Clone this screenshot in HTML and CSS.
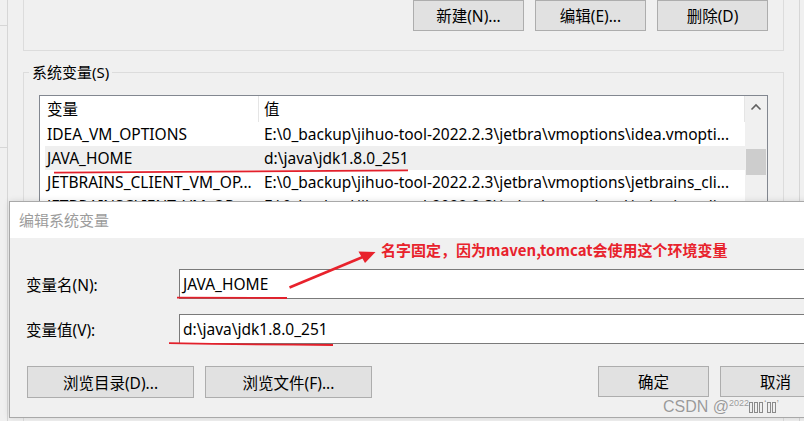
FILE: index.html
```html
<!DOCTYPE html>
<html lang="zh-CN">
<head>
<meta charset="utf-8">
<title>编辑系统变量</title>
<link rel="stylesheet" href="styles.css">
</head>
<body>
<div class="desk">
  <div class="behind">
    <div class="behind-line"></div>
    <div class="behind-line second"></div>
  </div>
  <div class="envwin">
    <div class="group-top">
      <button class="btn btn-sm">新建(N)...</button>
      <button class="btn btn-sm">编辑(E)...</button>
      <button class="btn btn-sm">删除(D)</button>
    </div>
    <fieldset class="group-sys">
      <legend>系统变量(S)</legend>
      <div class="listbox">
        <div class="list-main">
          <div class="list-head">
            <div class="hcell h1">变量</div>
            <div class="hcell h2">值</div>
          </div>
          <div class="row">
            <div class="r1">IDEA_VM_OPTIONS</div>
            <div class="r2">E:\0_backup\jihuo-tool-2022.2.3\jetbra\vmoptions\idea.vmopti...</div>
          </div>
          <div class="row sel">
            <div class="r1">JAVA_HOME</div>
            <div class="r2">d:\java\jdk1.8.0_251</div>
          </div>
          <div class="row">
            <div class="r1">JETBRAINS_CLIENT_VM_OP...</div>
            <div class="r2">E:\0_backup\jihuo-tool-2022.2.3\jetbra\vmoptions\jetbrains_cli...</div>
          </div>
          <div class="row">
            <div class="r1">JETBRAINSCLIENT_VM_OP...</div>
            <div class="r2">E:\0_backup\jihuo-tool-2022.2.3\jetbra\vmoptions\jetbrains_cli...</div>
          </div>
        </div>
        <div class="scrollbar">
          <svg class="sb-arrow" width="22" height="22" viewBox="0 0 22 22"><path d="M6.5 13.5 L11 9 L15.5 13.5" fill="none" stroke="#606060" stroke-width="1.6"/></svg>
          <div class="thumb"></div>
        </div>
      </div>
    </fieldset>
  </div>
</div>

<div class="dialog">
  <div class="dlg-title">编辑系统变量</div>
  <div class="dlg-body">
    <div class="field">
      <label>变量名(N):</label>
      <div class="input">JAVA_HOME</div>
    </div>
    <div class="field">
      <label>变量值(V):</label>
      <div class="input">d:\java\jdk1.8.0_251</div>
    </div>
    <div class="dlg-buttons">
      <button class="btn btn-wide">浏览目录(D)...</button>
      <button class="btn btn-wide">浏览文件(F)...</button>
      <div class="spacer"></div>
      <button class="btn btn-sm">确定</button>
      <button class="btn btn-sm">取消</button>
    </div>
  </div>
</div>

<svg class="marks" width="804" height="421" viewBox="0 0 804 421">
  <path d="M54 172.6 Q230 172 408 170.4" fill="none" stroke="#e3202b" stroke-width="1.8"/>
  <path d="M177 297.6 L287 298" fill="none" stroke="#e3202b" stroke-width="1.8"/>
  <path d="M169 343.2 Q250 344.6 333 345" fill="none" stroke="#e3202b" stroke-width="1.8"/>
  <path d="M289.5 287.5 L364 256.5" fill="none" stroke="#e8222c" stroke-width="2.6"/>
  <polygon points="375.5,252 358.5,251.5 365,263" fill="#e8222c"/>
</svg>

<div class="note">名字固定，因为maven,tomcat会使用这个环境变量</div>

<div class="watermark">CSDN @<span class="sup">2022</span><span class="tofu"></span><span class="tofu"></span><span class="tofu"></span><span class="tick">‘</span><span class="tofu"></span><span class="tofu"></span><span class="tick">’</span></div>
</body>
</html>
```
FILE: styles.css
```css
* { box-sizing: border-box; }
html, body { margin: 0; padding: 0; }
body {
  width: 804px;
  height: 421px;
  overflow: hidden;
  position: relative;
  background: #f0f0f0;
  font-family: "Noto Sans", "Noto Sans CJK SC", sans-serif;
  font-size: 15.5px;
  color: #000;
}

.desk { display: flex; height: 421px; }

.behind {
  width: 8px;
  flex: none;
  border-right: 1px solid #d6d6d6;
  padding-top: 25px;
}
.behind-line { height: 1px; background: #d6d6d6; }
.behind-line.second { margin-top: 121px; }

.envwin {
  width: 792px;
  flex: none;
  border-right: 1px solid #d6d6d6;
  padding-left: 15px;
}

.btn {
  font: inherit;
  color: #000;
  background: #e1e1e1;
  border: 1px solid #adadad;
  padding: 0;
  margin: 0;
  white-space: nowrap;
}
.btn-sm { width: 111px; height: 31px; }
.btn-wide { width: 167px; height: 32px; }

.group-top {
  width: 761px;
  height: 51px;
  border: 1px solid #dcdcdc;
  border-top: none;
  display: flex;
  justify-content: flex-end;
  align-items: flex-end;
  gap: 11px;
  padding: 0 15px 19px 0;
}

.group-sys {
  margin: 11px 0 0;
  width: 761px;
  height: 400px;
  border: 1px solid #dcdcdc;
  padding: 13px 15px 0;
  min-width: 0;
}
.group-sys legend {
  margin-left: -10px;
  padding: 0 3px;
  line-height: 20px;
  font-size: 15px;
}

.listbox {
  display: flex;
  width: 729px;
  height: 300px;
  border: 1px solid #828790;
  background: #fff;
}
.list-main { width: 705px; flex: none; }
.list-head { display: flex; height: 26px; }
.hcell {
  height: 26px;
  line-height: 26px;
  border-right: 1px solid #e5e5e5;
  white-space: nowrap;
}
.h1 { width: 219px; padding-left: 7px; }
.h2 { width: 486px; padding-left: 5px; }

.row {
  display: flex;
  height: 24px;
  line-height: 24px;
  margin-left: 5px;
  width: 700px;
  white-space: nowrap;
}
.row.sel { background: #efefef; }
.r1 { width: 213px; flex: none; padding-left: 2px; overflow: hidden; }
.r2 { flex: 1; padding-left: 6px; overflow: hidden; }

.scrollbar {
  width: 22px;
  flex: none;
  background: #f0f0f0;
}
.sb-arrow { display: block; }
.thumb {
  margin: 31px 0 0 1px;
  width: 20px;
  height: 26px;
  background: #cdcdcd;
}

.dialog {
  position: absolute;
  left: 9px;
  top: 201px;
  width: 839px;
  height: 217px;
  border: 1px solid #a9a9a9;
  background: #f0f0f0;
  box-shadow: 0 0 6px rgba(0, 0, 0, 0.12);
}
.dlg-title {
  height: 36px;
  line-height: 36px;
  background: #fff;
  padding-left: 9px;
  color: #9c9c9c;
  font-size: 15px;
}
.dlg-body { padding: 31px 16px 0 16px; }
.field { display: flex; align-items: center; height: 30px; }
.field + .field { margin-top: 15px; }
.field label { width: 153px; flex: none; }
.field .input {
  flex: 1;
  height: 30px;
  line-height: 28px;
  border: 1px solid #7a7a7a;
  background: #fff;
  padding-left: 3px;
}
.dlg-buttons {
  display: flex;
  gap: 11px;
  margin-top: 22px;
  padding-left: 1px;
}
.spacer { flex: 1; }

.marks {
  position: absolute;
  left: 0;
  top: 0;
  pointer-events: none;
}

.note {
  position: absolute;
  left: 381px;
  top: 240px;
  font-family: "Noto Sans CJK SC", "Liberation Sans", sans-serif;
  font-size: 15px;
  line-height: 20px;
  font-weight: bold;
  color: #e8222c;
  white-space: nowrap;
}

.watermark {
  position: absolute;
  left: 663px;
  top: 392px;
  font-family: "Liberation Sans", "Noto Sans", sans-serif;
  font-size: 16px;
  line-height: 22px;
  color: #9a9a9a;
  white-space: nowrap;
  text-shadow: 0 0 1px rgba(255, 255, 255, 0.8);
}
.watermark .sup {
  font-size: 9px;
  vertical-align: 6px;
}
.watermark .tofu {
  display: inline-block;
  width: 4px;
  height: 11px;
  border: 1px solid #8a8a8a;
  margin-right: 1px;
  vertical-align: -1px;
}
.watermark .tick { font-size: 11px; vertical-align: 4px; }
```
